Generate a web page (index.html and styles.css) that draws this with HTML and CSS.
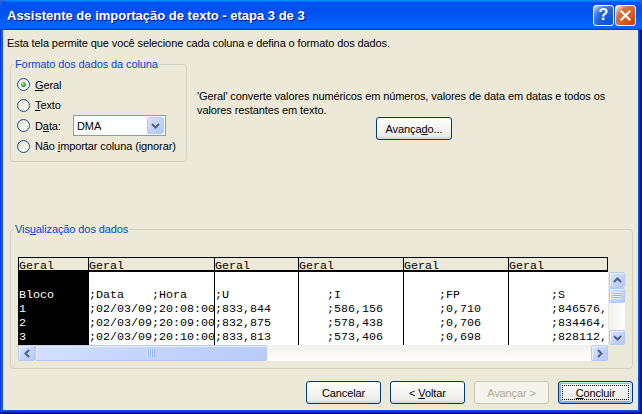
FILE: index.html
```html
<!DOCTYPE html>
<html lang="pt">
<head>
<meta charset="utf-8">
<title>Assistente de importação de texto</title>
<link rel="stylesheet" href="styles.css">
</head>
<body>
<div class="window">
  <div class="titlebar">
    <span class="title">Assistente de importação de texto - etapa 3 de 3</span>
    <div class="tb-buttons">
      <span class="tb-btn help">?</span>
      <span class="tb-btn close"><svg width="13" height="13" viewBox="0 0 13 13"><path d="M2.5 2.5 L10.5 10.5 M10.5 2.5 L2.5 10.5" stroke="#fff" stroke-width="2.2" stroke-linecap="square"/></svg></span>
    </div>
  </div>
  <div class="frame">
    <div class="client">
      <p class="intro">Esta tela permite que você selecione cada coluna e defina o formato dos dados.</p>
      <div class="top-row">
        <fieldset class="group format">
          <legend>Formato dos dados da coluna</legend>
          <div class="group-body options">
            <div class="opt"><span class="radio checked"></span><span class="lbl"><u>G</u>eral</span></div>
            <div class="opt"><span class="radio"></span><span class="lbl"><u>T</u>exto</span></div>
            <div class="opt"><span class="radio"></span><span class="lbl date-lbl">D<u>a</u>ta:</span>
              <div class="select"><span class="val">DMA</span><span class="dd-btn"><svg width="9" height="6" viewBox="0 0 9 6"><path d="M1 1 L4.5 4.5 L8 1" stroke="#4D6185" stroke-width="2" fill="none"/></svg></span></div>
            </div>
            <div class="opt"><span class="radio"></span><span class="lbl">Não <u>i</u>mportar coluna (ignorar)</span></div>
          </div>
        </fieldset>
        <div class="desc">
          <p>'Geral' converte valores numéricos em números, valores de data em datas e todos os<br>valores restantes em texto.</p>
          <button class="btn adv"><span>Avança<u>d</u>o...</span></button>
        </div>
      </div>
      <fieldset class="group preview-group">
        <legend>Vis<u>u</u>alização dos dados</legend>
        <div class="group-body">
          <div class="preview">
            <div class="hdr">
              <div class="hcell w1">Geral</div>
              <div class="hcell w2">Geral</div>
              <div class="hcell w3">Geral</div>
              <div class="hcell w4">Geral</div>
              <div class="hcell w5">Geral</div>
              <div class="hcell w6">Geral</div>
            </div>
            <div class="corner"></div>
            <div class="data">
              <div class="col w1 sel">
Bloco
1
2
3</div>
              <div class="col w2">
;Data    ;Hora
;02/03/09;20:08:00
;02/03/09;20:09:00
;02/03/09;20:10:00</div>
              <div class="col w3">
;U
;833,844
;832,875
;833,813</div>
              <div class="col w4">
    ;I
    ;586,156
    ;578,438
    ;573,406</div>
              <div class="col w5">
     ;FP
     ;0,710
     ;0,706
     ;0,698</div>
              <div class="col w6">
      ;S
      ;846576,
      ;834464,
      ;828112,</div>
            </div>
            <div class="vscroll">
              <span class="sb-btn v up"><svg width="9" height="6" viewBox="0 0 9 6"><path d="M1 5 L4.5 1.5 L8 5" stroke="#4D6185" stroke-width="2" fill="none"/></svg></span>
              <span class="thumb v"><span class="grip-h"></span></span>
              <span class="track"></span>
              <span class="sb-btn v down"><svg width="9" height="6" viewBox="0 0 9 6"><path d="M1 1 L4.5 4.5 L8 1" stroke="#4D6185" stroke-width="2" fill="none"/></svg></span>
            </div>
            <div class="hscroll">
              <span class="sb-btn h"><svg width="6" height="9" viewBox="0 0 6 9"><path d="M5 1 L1.5 4.5 L5 8" stroke="#4D6185" stroke-width="2" fill="none"/></svg></span>
              <span class="thumb h"><span class="grip-v"></span></span>
              <span class="track"></span>
              <span class="sb-btn h"><svg width="6" height="9" viewBox="0 0 6 9"><path d="M1 1 L4.5 4.5 L1 8" stroke="#4D6185" stroke-width="2" fill="none"/></svg></span>
            </div>
            <div class="corner"></div>
          </div>
        </div>
      </fieldset>
      <div class="buttons">
        <button class="btn"><span>Cancelar</span></button>
        <button class="btn"><span>&lt; <u>V</u>oltar</span></button>
        <button class="btn disabled"><span>Avançar &gt;</span></button>
        <button class="btn default"><span class="focus"><span><u>C</u>oncluir</span></span></button>
      </div>
    </div>
  </div>
</div>
</body>
</html>
```
FILE: styles.css
```css
* { box-sizing: border-box; }
html, body { margin: 0; padding: 0; }
body {
  width: 642px;
  height: 414px;
  overflow: hidden;
  background: #2B64D8;
  font-family: "Liberation Sans", Arial, sans-serif;
  font-size: 11px;
  letter-spacing: -0.1px;
  color: #000;
}
.window {
  width: 642px;
  height: 414px;
  display: flex;
  flex-direction: column;
}
.titlebar {
  height: 30px;
  flex: none;
  display: flex;
  align-items: center;
  padding: 0 6px 0 7px;
  background: linear-gradient(180deg, #0997ff, #0053ee 8%, #0050ee 40%, #0066ff 88%, #0066ff 93%, #005bff 95%, #003dd7 96%, #003dd7);
  border-radius: 7px 7px 0 0;
}
.title {
  flex: 1;
  color: #fff;
  font-weight: bold;
  font-size: 13px;
  letter-spacing: 0;
  text-shadow: 1px 1px #0F1089;
  white-space: nowrap;
}
.tb-buttons { display: flex; gap: 1px; }
.tb-btn {
  width: 21px;
  height: 21px;
  border: 1px solid #fff;
  border-radius: 3px;
  display: flex;
  align-items: center;
  justify-content: center;
  color: #fff;
  font-weight: bold;
  font-size: 16px;
  letter-spacing: 0;
  font-family: "Liberation Sans", Arial, sans-serif;
}
.tb-btn.help {
  background: radial-gradient(circle at 90% 90%, #0054e9 0%, #2263d5 55%, #4479e4 70%, #a3bbec 90%, #fff 100%);
}
.tb-btn.close {
  background: radial-gradient(circle at 90% 90%, #cc4600 0%, #dc6527 55%, #cd7546 70%, #ffccb2 90%, #fff 100%);
}
.frame {
  flex: 1;
  display: flex;
  padding: 0 4px 4px 3px;
  background: #0A53E3;
  box-shadow: inset -1px -1px #00138c, inset 1px 0 #0831d9, inset -2px -2px #001ea0, inset 2px 0 #166aee, inset -3px -3px #003bda, inset 3px 0 #0855dd;
}
.client {
  flex: 1;
  background: #ECE9D8;
  padding: 6px 5px 0 7px;
  display: flex;
  flex-direction: column;
}
.intro { margin: 0 0 0 -3px; line-height: 14px; }
.top-row { display: flex; align-items: flex-start; margin-top: 8px; }

fieldset.group {
  margin: 0;
  padding: 0;
  border: 1px solid #D0D0BF;
  border-radius: 4px;
  min-width: 0;
}
fieldset.group legend {
  padding: 0 1px;
  margin-left: 3px;
  color: #0046D5;
  line-height: 13px;
}
.format { width: 177px; flex: none; }
.options { padding: 3px 0 5px 6px; display: flex; flex-direction: column; }
.opt { display: flex; align-items: center; height: 21px; }
.opt:nth-child(2), .opt:nth-child(4) { height: 20px; }
.radio {
  width: 13px;
  height: 13px;
  flex: none;
  border-radius: 50%;
  border: 1px solid #1C5180;
  background: linear-gradient(135deg, #DCDCD7 0%, #F0F0EA 50%, #FFFFFF 100%);
  display: flex;
  align-items: center;
  justify-content: center;
  margin-right: 5px;
}
.radio.checked::after {
  content: "";
  width: 5px;
  height: 5px;
  border-radius: 50%;
  background: radial-gradient(circle at 35% 35%, #B8F0B8 0%, #3DB83D 45%, #1A8D1A 100%);
}
.date-lbl { width: 38px; }
.select {
  width: 93px;
  height: 21px;
  border: 1px solid #7F9DB9;
  background: #fff;
  display: flex;
  align-items: center;
  padding: 1px;
}
.select .val { flex: 1; padding-left: 2px; }
.dd-btn {
  width: 17px;
  height: 17px;
  border-radius: 2px;
  border: 1px solid #B3C8F5;
  background: linear-gradient(135deg, #D6E1FC 0%, #C1D3FB 50%, #B3C8F5 100%);
  display: flex;
  align-items: center;
  justify-content: center;
}
.desc { margin: 31px 0 0 10px; }
.desc p { margin: 0; line-height: 14px; white-space: nowrap; }

.btn {
  width: 75px;
  height: 23px;
  padding: 0;
  border: 1px solid #003C74;
  border-radius: 3px;
  background: linear-gradient(180deg, #FFFFFF, #ECEBE6 86%, #D6D0C5);
  font-family: "Liberation Sans", Arial, sans-serif;
  font-size: 11px;
  letter-spacing: -0.1px;
  color: #000;
  display: flex;
  align-items: center;
  justify-content: center;
  white-space: pre;
}
.adv { margin-left: 179px; width: 76px; }
.btn.disabled {
  border-color: #C9C7BA;
  background: #F5F4EA;
  color: #ACA899;
}
.btn.default {
  box-shadow: inset -1px 1px #cee7ff, inset 1px 2px #98b8ea, inset -2px 2px #bcd4f6, inset 1px -1px #89ade4, inset 2px -2px #89ade4;
  padding: 3px;
}
.btn .focus {
  flex: 1;
  align-self: stretch;
  border: 1px dotted #000;
  display: flex;
  align-items: center;
  justify-content: center;
}

fieldset.preview-group { margin-top: 61px; }
.preview-group .group-body { padding: 21px 0 7px 7px; }
.preview {
  display: grid;
  grid-template-columns: 590px 17px;
  grid-template-rows: 15px 73px 16px;
  width: 607px;
  font-family: "Liberation Mono", "Courier New", monospace;
  font-size: 11.67px;
  letter-spacing: 0;
}
.hdr { display: flex; }
.hcell {
  flex: none;
  border-top: 1px solid #000;
  border-left: 1px solid #000;
  border-bottom: 2px solid #000;
  background: #ECE9D8;
  line-height: 12px;
  padding-top: 2px;
  overflow: hidden;
  white-space: pre;
}
.hcell.w6 { border-right: 1px solid #000; }
.w1 { width: 70px; }
.w2 { width: 126px; }
.w3 { width: 84px; }
.w4 { width: 105px; }
.w5 { width: 105px; }
.w6 { width: 100px; }
.data { display: flex; background: #fff; overflow: hidden; }
.col {
  flex: none;
  border-left: 1px solid #000;
  white-space: pre;
  line-height: 14px;
  padding-top: 2px;
  overflow: hidden;
}
.col.sel { background: #000; color: #fff; }
.vscroll {
  display: flex;
  flex-direction: column;
  padding-left: 1px;
}
.vscroll .track { flex: 1; background: linear-gradient(90deg, #F3F1EC, #FEFEFB); }
.hscroll { display: flex; }
.hscroll .track { flex: 1; background: linear-gradient(180deg, #F3F1EC, #FEFEFB); }
.sb-btn {
  flex: none;
  border-radius: 2px;
  border: 1px solid #B6C9F3;
  background: linear-gradient(135deg, #DCE6FD 0%, #C6D6FB 45%, #B4C8F6 100%);
  box-shadow: inset 1px 1px rgba(255,255,255,0.6);
  display: flex;
  align-items: center;
  justify-content: center;
}
.sb-btn.h { width: 17px; height: 16px; }
.sb-btn.v.up { width: 16px; height: 16px; }
.sb-btn.v.down { width: 16px; height: 15px; }
.thumb {
  flex: none;
  border-radius: 2px;
  border: 1px solid #B6C9F3;
  background: linear-gradient(135deg, #D4E0FD 0%, #C4D4FA 50%, #B8CBF7 100%);
  box-shadow: inset 1px 1px rgba(255,255,255,0.6);
  display: flex;
  align-items: center;
  justify-content: center;
}
.thumb.h { width: 232px; height: 16px; }
.thumb.v { width: 16px; height: 15px; }
.grip-v {
  width: 8px;
  height: 8px;
  background: repeating-linear-gradient(90deg, #EEF4FE 0 1px, #8CB0F8 1px 2px);
}
.grip-h {
  width: 8px;
  height: 7px;
  background: repeating-linear-gradient(180deg, #EEF4FE 0 1px, #8CB0F8 1px 2px);
}
.buttons {
  display: flex;
  justify-content: flex-end;
  gap: 9px;
  margin-top: 12px;
}
```
